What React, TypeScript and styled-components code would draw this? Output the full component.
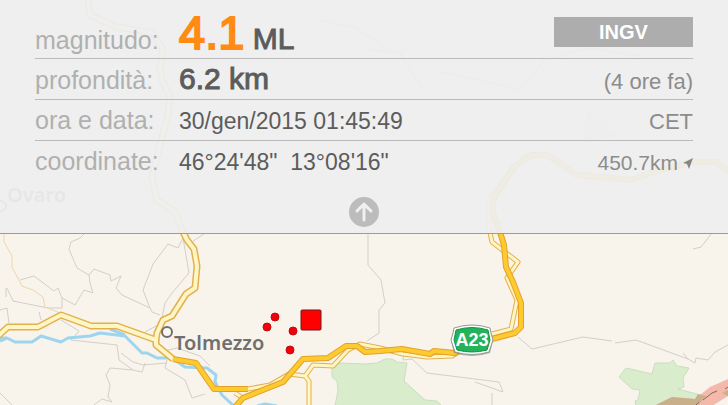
import React from "react";
import styled, { createGlobalStyle } from "styled-components";

const GlobalStyle = createGlobalStyle`
  * { box-sizing: border-box; }
  body {
    margin: 0;
    background: #f8f4ec;
    font-family: "Helvetica Neue", "Liberation Sans", Arial, sans-serif;
  }
`;

const Page = styled.main`
  display: grid;
  grid-template: minmax(100vh, auto) / minmax(0, 1fr);
  overflow: hidden;
`;

const MapCanvas = styled.svg`
  grid-area: 1 / 1;
  display: block;
  width: 100%;
  height: 100vh;
`;

const Panel = styled.section`
  grid-area: 1 / 1;
  align-self: start;
  z-index: 1;
  display: flex;
  flex-direction: column;
  align-items: center;
  padding: 0 35px 6px;
  background: rgba(238, 238, 239, 0.94);
  border-bottom: 1px solid #9b9b9b;
`;

const Details = styled.dl`
  width: 100%;
  margin: 0;
`;

const Row = styled.div<{ $first?: boolean }>`
  display: grid;
  grid-template-columns: 144px minmax(0, 1fr) auto;
  align-items: baseline;
  min-height: 41px;
  padding: ${(p) => (p.$first ? "9px 0 1px" : "4px 0 2px")};
  border-bottom: 1px solid #bababb;
  &:last-child {
    border-bottom: 0;
  }
`;

const Label = styled.dt`
  font-size: 25px;
  line-height: 32px;
  color: #b0b0b0;
`;

const Value = styled.dd<{ $strong?: boolean }>`
  margin: 0;
  font-size: ${(p) => (p.$strong ? 30 : 23)}px;
  line-height: ${(p) => (p.$strong ? 32 : 30)}px;
  color: #5c5c5c;
  -webkit-text-stroke: ${(p) => (p.$strong ? "1px currentColor" : "0")};
  white-space: pre;
`;

const Magnitude = styled.strong`
  font-size: 47px;
  font-weight: 400;
  line-height: 48px;
  color: #ff8a14;
  -webkit-text-stroke: 2px currentColor;
`;

const Note = styled.dd<{ $small?: boolean }>`
  display: flex;
  align-items: center;
  gap: 5px;
  margin: 0;
  font-size: ${(p) => (p.$small ? 21 : 22)}px;
  line-height: 30px;
  color: #8c8c8c;
`;

const AgencyCell = styled.dd`
  align-self: end;
  margin: 0 0 10px;
`;

const AgencyButton = styled.button`
  display: block;
  width: 139px;
  height: 30px;
  padding: 0;
  border: 0;
  background: #adadad;
  color: #fff;
  font: 700 20px/30px "Helvetica Neue", "Liberation Sans", Arial, sans-serif;
  cursor: pointer;
`;

const CollapseButton = styled.button`
  display: block;
  width: 30px;
  height: 30px;
  margin-top: 15px;
  padding: 0;
  border: 0;
  border-radius: 50%;
  background: #bcbcbc;
  cursor: pointer;
  svg {
    display: block;
  }
`;

const Casing = styled.path<{ $w?: number }>`
  fill: none;
  stroke: #e3b050;
  stroke-width: ${(p) => p.$w ?? 7};
  stroke-linejoin: round;
`;

const RoadFill = styled.path<{ $w?: number }>`
  fill: none;
  stroke: #fff6c4;
  stroke-width: ${(p) => p.$w ?? 4};
  stroke-linejoin: round;
`;

const HighwayCasing = styled(Casing)`
  stroke: #e5a02c;
`;

const HighwayFill = styled(RoadFill)`
  stroke: #fdcb2e;
`;

const Boundary = styled.path`
  fill: none;
  stroke: #d3cfc9;
  stroke-width: 1;
`;

const River = styled.path`
  fill: none;
  stroke: #9ed5ee;
  stroke-width: 3;
  stroke-linejoin: round;
`;

const Park = styled.path`
  fill: #d9edcd;
  stroke: #c9dfc0;
`;

const TownName = styled.text`
  font: 600 20px "Noto Sans", "Open Sans", sans-serif;
  fill: #6f6f70;
`;

const ShieldText = styled.text`
  font: 700 18px "Liberation Sans", Arial, sans-serif;
  fill: #fff;
  text-anchor: middle;
`;

const boundaries = [
  "M85 233L80 238L71 242L69 249L77 268L89 275L90 283L93 293L84 290L75 305L62 298L58 288L54 291L34 276L20 280",
  "M89 275L94 269L110 275L111 281L121 276L116 288L122 295L150 308L152 312L160 315",
  "M150 308L143 290L153 264L168 244L178 248L183 238L189 273L172 293L165 303L162 318",
  "M6 288V297M7 288L13 301L48 308H62V298M0 310L7 308L9 323M39 312L41 320",
  "M61 320L79 331L71 340L117 345L119 360L133 370L110 368L106 375L110 385L108 397L112 402L102 399L94 405",
  "M121 353L133 362L143 365L167 363M145 363L142 372L133 370M145 332L158 325",
  "M167 360L165 368L185 380L192 398L205 394M160 352L177 348L200 356L210 366M0 393L12 405",
  "M368 232V265L381 280L385 303L379 310V333L367 341",
  "M404 355L403 360L412 359L427 373L499 382L503 392L475 382M492 393V405",
  "M518 337L532 349L583 337L612 341M615 343L636 340L688 359L683 353M688 359L695 363L696 358L708 360L715 352L728 345",
  "M712 233L701 247L693 249M192 242L205 233",
];

const localRoads = [
  "M-2 336L8 327L38 327L61 315L91 326L117 326L156 340L156 345L173 359",
  "M88 0L90 15L117 27L153 33L163 50L160 67L162 80L170 97L168 115L162 137L152 177L157 200L175 212L183 232L187 240L194 249L197 266L195 288L186 294L172 316L163 320L157 333L156 340",
];

const sideRoads = [
  "M248 389L270 385L289 374L305 376L313 365L333 366L348 350L360 344L380 348L403 354L427 357L452 356L457 353",
  "M305 376L309 381V406M235 393L243 398",
  "M492 334L511 329L517 300L507 278L518 262L492 242L489 228L489 200L510 172L526 156",
];

const highways = [
  "M173 359L196 363L214 389L248 389",
  "M235 407L243 398L283 382L303 359L328 358L346 346L357 346L365 352L380 351L402 349L430 354L434 351L455 353L492 339L515 333L521 327L521 303L513 282L506 267L504 245L500 232L492 210L494 197L514 167L531 155L547 155L577 175L631 180L654 172L691 162L717 162L730 173",
];

const epicentres = [
  [275, 317],
  [267, 327],
  [293, 331],
  [290, 350],
];

function EpicentreMap() {
  return (
    <MapCanvas viewBox="0 0 728 405" preserveAspectRatio="xMidYMin slice" role="img" aria-label="Mappa di Tolmezzo">
      <rect width="728" height="405" fill="#f8f4ec" />
      <Park d="M335 406L338 390L337 381L332 377V369L340 363L365 364L377 363L385 359H392L397 362L407 363L404 381L425 400L437 401L442 406Z" />
      <Park d="M619 377L626 368L652 374L655 363L670 363L673 360L677 366L689 368L683 378L684 387L678 389L693 393L705 396L700 406H636L635 401L638 400L640 390L632 389Z" />
      <Park d="M584 142L588 112L615 136Z" />
      <path d="M654 406L672 397L695 399L710 387L728 379V396L712 406Z" fill="#f5b9ab" />
      <path d="M654 406L672 397L695 399L698 394L706 396L697 406Z" fill="#c9b08b" />
      <path d="M722 393L728 390V396Z" fill="#c9b08b" />
      <path d="M696 405L699 402M703 400L712 393L717 391M725 389L728 387" stroke="#87685c" fill="none" />
      {boundaries.map((d) => (
        <Boundary key={d} d={d} />
      ))}
      <path d="M364 50L400 52L415 78L424 90M440 72L480 80L520 90L545 60L590 48L640 56M320 20L355 28L400 56" stroke="#efc2bd" strokeWidth="2" fill="none" />
      <path d="M4 232V242L12 256V267L22 286L33 290L43 297L45 307L60 313" stroke="#f0d5a8" fill="none" />
      <River d="M0 341L7 338L15 342H32L41 336L61 342L68 338L90 336L100 333L125 336L142 353H147L157 358H172L185 367L207 368L216 375L215 382L222 395L234 406M110 329L125 335M0 338L7 338M257 406L265 404L277 406" />
      {localRoads.map((d) => (
        <Casing key={d} d={d} />
      ))}
      {sideRoads.map((d) => (
        <Casing key={d} d={d} $w={5} />
      ))}
      {localRoads.map((d) => (
        <RoadFill key={d} d={d} />
      ))}
      {sideRoads.map((d) => (
        <RoadFill key={d} d={d} $w={3} />
      ))}
      {highways.map((d) => (
        <HighwayCasing key={d} d={d} $w={6} />
      ))}
      {highways.map((d) => (
        <HighwayFill key={d} d={d} />
      ))}
      <circle cx="167" cy="332" r="5" fill="#fbf8f2" stroke="#6f6f70" strokeWidth="2" />
      <TownName x="174" y="350">Tolmezzo</TownName>
      <circle cx="1" cy="206" r="5" fill="#fbf8f2" stroke="#6f6f70" strokeWidth="2" />
      <TownName x="7" y="202">Ovaro</TownName>
      {epicentres.map(([x, y]) => (
        <circle key={`${x}-${y}`} cx={x} cy={y} r="4" fill="#f00008" stroke="#c40d10" strokeWidth="1" />
      ))}
      <rect x="301" y="310" width="20" height="20" rx="1" fill="#ff0000" stroke="#6b1d1d" />
      <path d="M454 329Q472 324 490 329L493 341L490 353Q472 359 454 353L451 341Z" fill="#666" opacity="0.5" />
      <path d="M454 328Q472 322 490 328Q491 334 493 340Q491 346 489 352Q472 357 455 352Q453 346 451 340Q453 334 454 328Z" fill="#fff" stroke="#8c9f90" />
      <path d="M456 330Q472 325 488 330L490 340L487 350Q472 354 457 350L454 340Z" fill="#22b35b" stroke="#169148" strokeLinejoin="round" />
      <ShieldText x="472" y="346">A23</ShieldText>
    </MapCanvas>
  );
}

export default function App() {
  return (
    <Page>
      <GlobalStyle />
      <EpicentreMap />
      <Panel>
        <Details>
          <Row $first>
            <Label>magnitudo:</Label>
            <Value $strong>
              <Magnitude>4.1</Magnitude> ML
            </Value>
            <AgencyCell>
              <AgencyButton type="button">INGV</AgencyButton>
            </AgencyCell>
          </Row>
          <Row>
            <Label>profondità:</Label>
            <Value $strong>6.2 km</Value>
            <Note>(4 ore fa)</Note>
          </Row>
          <Row>
            <Label>ora e data:</Label>
            <Value>30/gen/2015 01:45:49</Value>
            <Note>CET</Note>
          </Row>
          <Row>
            <Label>coordinate:</Label>
            <Value>{"46°24'48\"  13°08'16\""}</Value>
            <Note $small>
              450.7km
              <svg width="10" height="12" viewBox="0 0 10 12" aria-hidden="true">
                <path d="M10 1L0 6L4 7L6 12Z" fill="#858585" />
              </svg>
            </Note>
          </Row>
        </Details>
        <CollapseButton type="button" aria-label="Chiudi i dettagli">
          <svg width="30" height="30" viewBox="0 0 30 30" aria-hidden="true">
            <path d="M15 23V8M8 14L15 7L22 14" fill="none" stroke="#f0f0f0" strokeWidth="3" strokeLinecap="round" strokeLinejoin="round" />
          </svg>
        </CollapseButton>
      </Panel>
    </Page>
  );
}
